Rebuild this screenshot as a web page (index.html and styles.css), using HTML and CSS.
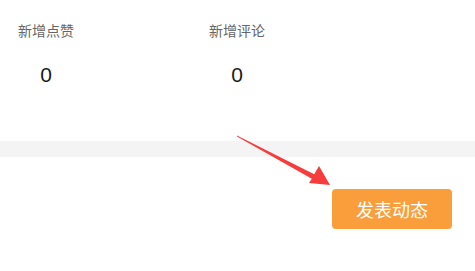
FILE: index.html
```html
<!DOCTYPE html>
<html lang="zh">
<head>
<meta charset="utf-8">
<link rel="stylesheet" href="styles.css">
</head>
<body>
<div class="page">
  <section class="stats">
    <div class="stat">
      <div class="stat-label">新增点赞</div>
      <div class="stat-value">0</div>
    </div>
    <div class="stat">
      <div class="stat-label">新增评论</div>
      <div class="stat-value">0</div>
    </div>
  </section>
  <div class="divider"></div>
  <section class="actions">
    <button class="publish">发表动态</button>
  </section>
  <svg class="arrow" width="475" height="271" viewBox="0 0 475 271">
    <polygon points="237,135.6 314.2,174.3 319,166 330,185 309,183 311.8,178.7 237,136.4" fill="#f63c3c"/>
  </svg>
</div>
</body>
</html>
```

FILE: styles.css
```css
html, body {
  margin: 0;
  padding: 0;
  background: #ffffff;
}
body {
  font-family: "Noto Sans CJK SC", "Liberation Sans", sans-serif;
  width: 475px;
  height: 271px;
  overflow: hidden;
}
.page {
  position: relative;
  width: 475px;
  height: 271px;
}
.stats {
  display: flex;
  gap: 135px;
  padding: 20px 0 0 18px;
  height: 141px;
  box-sizing: border-box;
}
.stat {
  display: flex;
  flex-direction: column;
  align-items: center;
}
.stat-label {
  font-size: 14px;
  line-height: 20px;
  color: #666666;
}
.stat-value {
  font-family: "Liberation Sans", "Noto Sans", sans-serif;
  font-size: 21px;
  line-height: 28px;
  color: #1a1a1a;
  margin-top: 21px;
}
.divider {
  height: 16px;
  background: #f4f4f4;
}
.actions {
  display: flex;
  justify-content: flex-end;
  padding: 32px 23px 0 0;
}
.publish {
  width: 120px;
  height: 40px;
  border: none;
  border-radius: 4px;
  background: #f99e3b;
  color: #ffffff;
  font-family: "Noto Sans CJK SC", sans-serif;
  font-size: 18px;
  padding: 0;
  cursor: pointer;
}
.arrow {
  position: absolute;
  left: 0;
  top: 0;
  pointer-events: none;
}
```
